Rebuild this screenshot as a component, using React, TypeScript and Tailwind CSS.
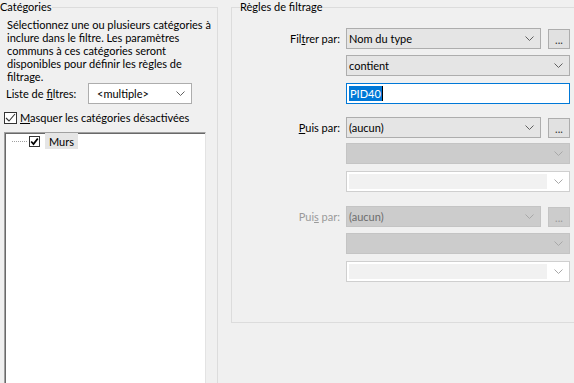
import React from "react";

function Chevron({ color = "#606060" }: { color?: string }) {
  return (
    <svg width="9" height="5" viewBox="0 0 9 5" className="shrink-0">
      <path d="M0.5 0.5L4.5 4.5L8.5 0.5" fill="none" stroke={color} strokeWidth="1" />
    </svg>
  );
}

function Combo({ text, width, variant }: { text?: string; width: string; variant: "active" | "disabled" | "edit" | "white" }) {
  if (variant === "active") {
    return (
      <div className={`flex items-center h-[21px] ${width} bg-[#e5e5e5] border border-[#adadad] pl-[2px] pr-[6px]`}>
        <span className="flex-1 whitespace-nowrap">{text}</span>
        <Chevron />
      </div>
    );
  }
  if (variant === "disabled") {
    return (
      <div className={`flex items-center h-[21px] ${width} bg-[#cccccc] border border-[#c4c4c4] pl-[2px] pr-[6px]`}>
        <span className="flex-1 whitespace-nowrap text-[#6d6d6d]">{text}</span>
        <Chevron color="#a8a8a8" />
      </div>
    );
  }
  if (variant === "white") {
    return (
      <div className={`flex items-center h-[21px] ${width} bg-white border border-[#adadad] pl-[8px] pr-[6px]`}>
        <span className="flex-1 whitespace-nowrap">{text}</span>
        <Chevron />
      </div>
    );
  }
  return (
    <div className={`flex items-center h-[21px] ${width} bg-white border border-[#cfcfcf] p-[2px] pr-[6px]`}>
      <div className="flex-1 h-full bg-[#f1f1f1]" />
      <div className="w-[16px] flex justify-end">
        <Chevron color="#a8a8a8" />
      </div>
    </div>
  );
}

function DotsButton({ disabled }: { disabled?: boolean }) {
  return (
    <div
      className={`flex items-end justify-center w-[22px] h-[20px] border pb-[2px] leading-[12px] ${
        disabled ? "bg-[#cccccc] border-[#c4c4c4] text-[#9a9a9a]" : "bg-[#e1e1e1] border-[#adadad] text-[#333]"
      }`}
    >
      ...
    </div>
  );
}

function Row({ label, children, className = "", disabled }: { label?: React.ReactNode; children: React.ReactNode; className?: string; disabled?: boolean }) {
  return (
    <div className={`flex items-center ${className}`}>
      <div className={`w-[100px] text-right whitespace-nowrap ${disabled ? "text-[#9a9a9a]" : ""}`}>{label}</div>
      <div className="ml-[6px] flex items-center">{children}</div>
    </div>
  );
}

export default function App() {
  return (
    <div className="w-[574px] h-[383px] overflow-hidden bg-[#f0f0f0] text-[11px] leading-[13px] text-black font-['Lato',sans-serif] flex items-start">
      {/* Left group */}
      <fieldset className="ml-[-9px] w-[227px] min-w-0 h-[420px] border border-[#dcdcdc] pl-[8px] shrink-0">
        <legend className="p-0 leading-[14px]">Catégories</legend>
        <div className="ml-[7px] mt-[4px] whitespace-nowrap leading-[13px]">
          Sélectionnez une ou plusieurs catégories à<br />
          inclure dans le filtre. Les paramètres<br />
          communs à ces catégories seront<br />
          disponibles pour définir les règles de<br />
          filtrage.
        </div>
        <div className="ml-[6px] flex items-center h-[21px]">
          <span className="w-[82px] whitespace-nowrap">
            Liste de <span className="underline">f</span>iltres:
          </span>
          <Combo text="<multiple>" width="w-[104px]" variant="white" />
        </div>
        <div className="ml-[4px] mt-[7px] flex items-center h-[13px]">
          <div className="w-[13px] h-[12px] border border-[#333] bg-white flex items-center justify-center">
            <svg width="11" height="10" viewBox="0 0 11 10">
              <path d="M1 5L4 8L10 1" fill="none" stroke="#333" strokeWidth="1.1" />
            </svg>
          </div>
          <span className="ml-[3px] whitespace-nowrap">
            <span className="underline">M</span>asquer les catégories désactivées
          </span>
        </div>
        <div className="ml-[4px] mt-[8px] w-[202px] h-[300px] bg-white border-t border-l border-t-[#a0a0a0] border-l-[#a0a0a0] border-r border-b border-r-[#e3e3e3] border-b-[#e3e3e3] shadow-[inset_1px_1px_0_#696969]">
          <div className="flex items-center h-[16px] mt-0">
            <div className="ml-[7px] w-[15px] border-t border-dotted border-[#a0a0a0]" />
            <div className="ml-[2px] w-[11px] h-[11px] border border-[#333] bg-white flex items-center justify-center">
              <svg width="9" height="9" viewBox="0 0 9 9">
                <path d="M1.2 4.5L3.5 7L7.8 1.5" fill="none" stroke="#000" strokeWidth="1.8" />
              </svg>
            </div>
            <div className="ml-[5px] h-[16px] px-[4px] bg-[#e5e5e5] flex items-center">Murs</div>
          </div>
        </div>
      </fieldset>

      {/* Right group */}
      <fieldset className="ml-[13px] w-[369px] min-w-0 h-[323px] border border-[#dcdcdc] pl-[8px] shrink-0">
        <legend className="p-0 leading-[14px]">Règles de filtrage</legend>
        <Row
          className="mt-[14px]"
          label={
            <>
              Fil<span className="underline">t</span>rer par:
            </>
          }
        >
          <Combo text="Nom du type" width="w-[195px]" variant="active" />
          <div className="ml-[7px]">
            <DotsButton />
          </div>
        </Row>
        <Row className="mt-[6px]">
          <Combo text="contient" width="w-[224px]" variant="active" />
        </Row>
        <Row className="mt-[7px]">
          <div className="flex items-center h-[21px] w-[224px] bg-white border border-[#0078d7] pl-[2px]">
            <span className="bg-[#0078d7] text-white leading-[15px] px-[1px]">PID40</span>
            <span className="w-[1px] h-[15px] bg-black" />
          </div>
        </Row>
        <Row
          className="mt-[13px]"
          label={
            <>
              <span className="underline">P</span>uis par:
            </>
          }
        >
          <Combo text="(aucun)" width="w-[195px]" variant="active" />
          <div className="ml-[7px]">
            <DotsButton />
          </div>
        </Row>
        <Row className="mt-[5px]">
          <Combo width="w-[224px]" variant="disabled" />
        </Row>
        <Row className="mt-[7px]">
          <Combo width="w-[224px]" variant="edit" />
        </Row>
        <Row
          className="mt-[14px]"
          disabled
          label={
            <>
              Pui<span className="underline">s</span> par:
            </>
          }
        >
          <Combo text="(aucun)" width="w-[195px]" variant="disabled" />
          <div className="ml-[7px]">
            <DotsButton disabled />
          </div>
        </Row>
        <Row className="mt-[6px]">
          <Combo width="w-[224px]" variant="disabled" />
        </Row>
        <Row className="mt-[7px]">
          <Combo width="w-[224px]" variant="edit" />
        </Row>
      </fieldset>
    </div>
  );
}
